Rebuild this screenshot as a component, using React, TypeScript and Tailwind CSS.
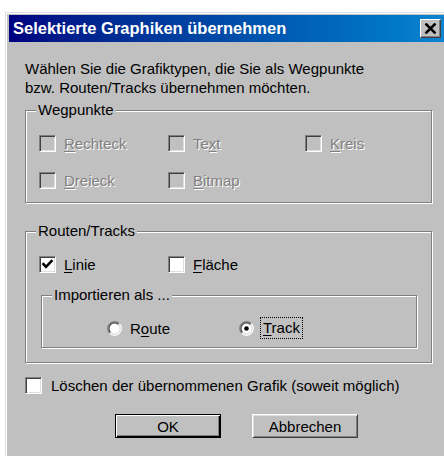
import type { ReactNode } from 'react'

const font = 'font-["Liberation_Sans",Arial,sans-serif]'

function Check({ checked = false, disabled = false }: { checked?: boolean; disabled?: boolean }) {
  return (
    <span
      className={`relative inline-block h-[17px] w-[17px] shrink-0 border border-t-[#808080] border-l-[#808080] border-r-white border-b-white shadow-[inset_1px_1px_#404040,inset_-1px_-1px_#dfdfdf] ${disabled ? 'bg-[#c0c0c0]' : 'bg-white'}`}
    >
      {checked && (
        <svg className="absolute left-0 top-0" width="15" height="15" viewBox="0 0 15 15">
          <path d="M3.5 7 L6 9.8 L11.5 4" fill="none" stroke="#000" strokeWidth="2.6" strokeLinecap="square" />
        </svg>
      )}
    </span>
  )
}

function Radio({ on = false }: { on?: boolean }) {
  // sunken round button, dark arcs top-left, light arcs bottom-right
  const arc = (r: number, tl: boolean) => {
    const c = 7.5
    const d = r * 0.7071
    return tl
      ? `M${c - d} ${c + d} A${r} ${r} 0 0 1 ${c + d} ${c - d}`
      : `M${c + d} ${c - d} A${r} ${r} 0 0 1 ${c - d} ${c + d}`
  }
  return (
    <svg width="15" height="15" viewBox="0 0 15 15" className="shrink-0">
      <circle cx="7.5" cy="7.5" r="6" fill="#fff" />
      <path d={arc(6.8, true)} fill="none" stroke="#808080" strokeWidth="1.2" />
      <path d={arc(6.8, false)} fill="none" stroke="#fff" strokeWidth="1.2" />
      <path d={arc(5.6, true)} fill="none" stroke="#404040" strokeWidth="1.2" />
      <path d={arc(5.6, false)} fill="none" stroke="#dfdfdf" strokeWidth="1.2" />
      {on && <circle cx="7.5" cy="7.5" r="2.3" fill="#000" />}
    </svg>
  )
}

function Label({ pre = '', u, post, disabled = false }: { pre?: string; u: string; post: string; disabled?: boolean }) {
  return (
    <span className={disabled ? 'text-[#808080] [text-shadow:1px_1px_0_#fff]' : 'text-black'}>
      {pre}
      <span className="underline underline-offset-2">{u}</span>
      {post}
    </span>
  )
}

function Group({ title, className, children }: { title: string; className: string; children: ReactNode }) {
  return (
    <div className={`relative border border-[#808080] shadow-[inset_1px_1px_#fff,1px_1px_#fff] ${className}`}>
      <span className="absolute left-[10px] top-[-11px] bg-[#c0c0c0] px-[2px] leading-[19px]">{title}</span>
      {children}
    </div>
  )
}

export default function App() {
  return (
    <div className={`h-[456px] w-[444px] overflow-hidden bg-white pl-[5px] pt-[12px] text-[15px] leading-[19px] text-black ${font}`}>
      <div className="h-[460px] w-[445px] border-l border-t border-[#dfdfdf] bg-[#c0c0c0] pl-[3px] pt-[2px] shadow-[inset_1px_1px_#fff]">
        {/* title bar */}
        <div className="flex h-[27px] w-[435px] items-center justify-between bg-gradient-to-r from-[#000080] to-[#1084d0] pl-[4px] pr-[3px]">
          <span className="text-[16.5px] font-bold text-white">Selektierte Graphiken übernehmen</span>
          <span className="flex h-[19px] w-[21px] items-center justify-center border border-t-white border-l-white border-r-[#404040] border-b-[#404040] bg-[#c0c0c0] shadow-[inset_-1px_-1px_#808080]">
            <svg width="13" height="11" viewBox="0 0 13 11">
              <path d="M1.5 0.5 L11.5 10.5 M11.5 0.5 L1.5 10.5" stroke="#000" strokeWidth="2.5" />
            </svg>
          </span>
        </div>

        <div className="pl-[16px]">
          <p className="mt-[17px]">
            Wählen Sie die Grafiktypen, die Sie als Wegpunkte
            <br />
            bzw. Routen/Tracks übernehmen möchten.
          </p>

          <Group title="Wegpunkte" className="mt-[13px] h-[93px] w-[407px] pl-[13px] pt-[23px]">
            <div className="grid grid-cols-[129px_137px_1fr] gap-y-[18px]">
              <div className="flex items-center gap-[8px]"><Check disabled /><Label u="R" post="echteck" disabled /></div>
              <div className="flex items-center gap-[8px]"><Check disabled /><Label pre="Te" u="x" post="t" disabled /></div>
              <div className="flex items-center gap-[8px]"><Check disabled /><Label u="K" post="reis" disabled /></div>
              <div className="flex items-center gap-[8px]"><Check disabled /><Label u="D" post="reieck" disabled /></div>
              <div className="flex items-center gap-[8px]"><Check disabled /><Label u="B" post="itmap" disabled /></div>
            </div>
          </Group>

          <Group title="Routen/Tracks" className="mt-[28px] h-[132px] w-[407px] pl-[13px] pt-[23px]">
            <div className="grid grid-cols-[129px_1fr]">
              <div className="flex items-center gap-[8px]"><Check checked /><Label u="L" post="inie" /></div>
              <div className="flex items-center gap-[8px]"><Check /><Label u="F" post="läche" /></div>
            </div>
            <Group title="Importieren als ..." className="ml-[2px] mt-[21px] h-[53px] w-[376px] pl-[65px] pt-[21px]">
              <div className="flex items-center">
                <div className="flex w-[132px] items-center gap-[8px]"><Radio /><Label pre="R" u="o" post="ute" /></div>
                <div className="flex items-center gap-[6px]">
                  <Radio on />
                  <span className="border border-dotted border-black px-[2px] leading-[20px]"><Label u="T" post="rack" /></span>
                </div>
              </div>
            </Group>
          </Group>

          <div className="mt-[13px] flex items-center gap-[9px]">
            <Check />
            <span>Löschen der übernommenen Grafik (soweit möglich)</span>
          </div>

          <div className="ml-[90px] mt-[19px] flex gap-[31px]">
            <button className="h-[24px] w-[106px] border border-black bg-[#c0c0c0] shadow-[inset_1px_1px_#fff,inset_-1px_-1px_#000,inset_-2px_-2px_#808080]">
              OK
            </button>
            <button className="h-[24px] w-[106px] border border-t-white border-l-white border-r-[#404040] border-b-[#404040] bg-[#c0c0c0] shadow-[inset_1px_1px_#dfdfdf,inset_-1px_-1px_#808080]">
              Abbrechen
            </button>
          </div>
        </div>
      </div>
    </div>
  )
}
